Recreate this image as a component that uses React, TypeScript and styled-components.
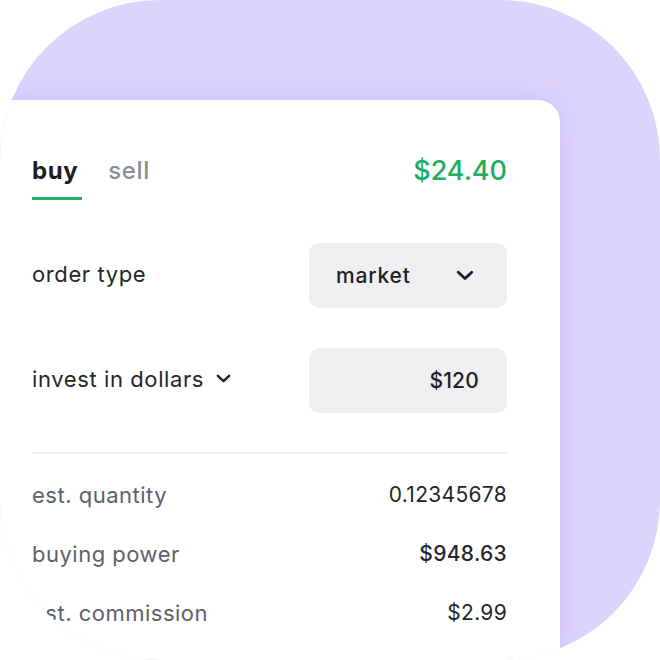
import styled, { createGlobalStyle } from 'styled-components'

const GlobalStyle = createGlobalStyle`
  html, body {
    margin: 0;
    padding: 0;
    background: #ffffff;
  }
  body {
    font-family: Inter, "Noto Sans", sans-serif;
  }
`

function Chevron({ size, stroke }: { size: number; stroke: number }) {
  return (
    <svg width={size} height={size * 0.6} viewBox="0 0 20 12" fill="none">
      <path
        d="M2.5 2.5L10 9.5L17.5 2.5"
        stroke="#1f2126"
        strokeWidth={stroke}
        strokeLinecap="round"
        strokeLinejoin="round"
      />
    </svg>
  )
}

const rows = [
  { label: 'est. quantity', value: '0.12345678', strong: false },
  { label: 'buying power', value: '$948.63', strong: true },
  { label: 'est. commission', value: '$2.99', strong: false },
]

export default function App() {
  return (
    <>
      <GlobalStyle />
      <Frame>
        <Card>
          <TabBar>
            <Tabs>
              <Tab $active>buy</Tab>
              <Tab>sell</Tab>
            </Tabs>
            <Price>$24.40</Price>
          </TabBar>

          <FieldRow>
            <FieldLabel>order type</FieldLabel>
            <SelectBox>
              <span>market</span>
              <Chevron size={18} stroke={3.2} />
            </SelectBox>
          </FieldRow>

          <FieldRow>
            <FieldLabel>
              invest in dollars
              <Chevron size={15} stroke={3.4} />
            </FieldLabel>
            <InputBox>$120</InputBox>
          </FieldRow>

          <Divider />

          <Summary>
            {rows.map(row => (
              <SummaryRow key={row.label}>
                <SummaryLabel>{row.label}</SummaryLabel>
                <SummaryValue $strong={row.strong}>{row.value}</SummaryValue>
              </SummaryRow>
            ))}
          </Summary>
        </Card>
      </Frame>
    </>
  )
}

const Frame = styled.div`
  width: 660px;
  height: 660px;
  border-radius: 160px;
  overflow: hidden;
  background: #ddd4fd;
  padding-top: 100px;
  box-sizing: border-box;
`

const Card = styled.div`
  width: 560px;
  height: 560px;
  box-sizing: border-box;
  background: #ffffff;
  border-top-right-radius: 22px;
  box-shadow: 0 0 28px rgba(120, 90, 220, 0.16);
  padding: 50px 53px 0 32px;
  display: flex;
  flex-direction: column;
`

const TabBar = styled.div`
  display: flex;
  justify-content: space-between;
  align-items: flex-start;
  height: 53px;
`

const Tabs = styled.div`
  display: flex;
  gap: 28px;
`

const Tab = styled.div<{ $active?: boolean }>`
  position: relative;
  font-size: 24px;
  line-height: 42px;
  letter-spacing: 0.6px;
  font-weight: ${props => (props.$active ? 700 : 500)};
  color: ${props => (props.$active ? '#1d1e22' : '#8b8d95')};
  padding-right: ${props => (props.$active ? '2px' : '0')};

  &::after {
    content: '';
    display: ${props => (props.$active ? 'block' : 'none')};
    position: absolute;
    left: 0;
    bottom: -8px;
    width: 50px;
    height: 3px;
    background: #22ad5f;
  }
`

const Price = styled.div`
  font-size: 27px;
  line-height: 42px;
  font-weight: 500;
  color: #21ad5e;
`

const FieldRow = styled.div`
  display: flex;
  justify-content: space-between;
  align-items: center;
  margin-top: 40px;
`

const FieldLabel = styled.div`
  display: flex;
  align-items: center;
  gap: 12px;
  font-size: 22px;
  letter-spacing: 0.6px;
  color: #24262b;
  margin-top: -4px;
`

const SelectBox = styled.div`
  width: 198px;
  height: 65px;
  box-sizing: border-box;
  border-radius: 10px;
  background: #efeff1;
  display: flex;
  align-items: center;
  justify-content: space-between;
  padding: 0 33px 0 27px;
  font-size: 21px;
  letter-spacing: 0.8px;
  font-weight: 500;
  color: #1f2126;
`

const InputBox = styled(SelectBox)`
  justify-content: flex-end;
  padding: 0 28px;
  letter-spacing: 0.2px;
`

const Divider = styled.div`
  height: 2px;
  background: #f0f0f2;
  margin-top: 39px;
`

const Summary = styled.div`
  display: flex;
  flex-direction: column;
  gap: 31px;
  margin-top: 27px;
`

const SummaryRow = styled.div`
  display: flex;
  justify-content: space-between;
  align-items: center;
  line-height: 28px;
`

const SummaryLabel = styled.div`
  font-size: 22px;
  letter-spacing: 0.5px;
  color: #5e616a;
`

const SummaryValue = styled.div<{ $strong: boolean }>`
  font-size: 21px;
  letter-spacing: 0.3px;
  font-weight: ${props => (props.$strong ? 500 : 400)};
  color: #25272c;
`
